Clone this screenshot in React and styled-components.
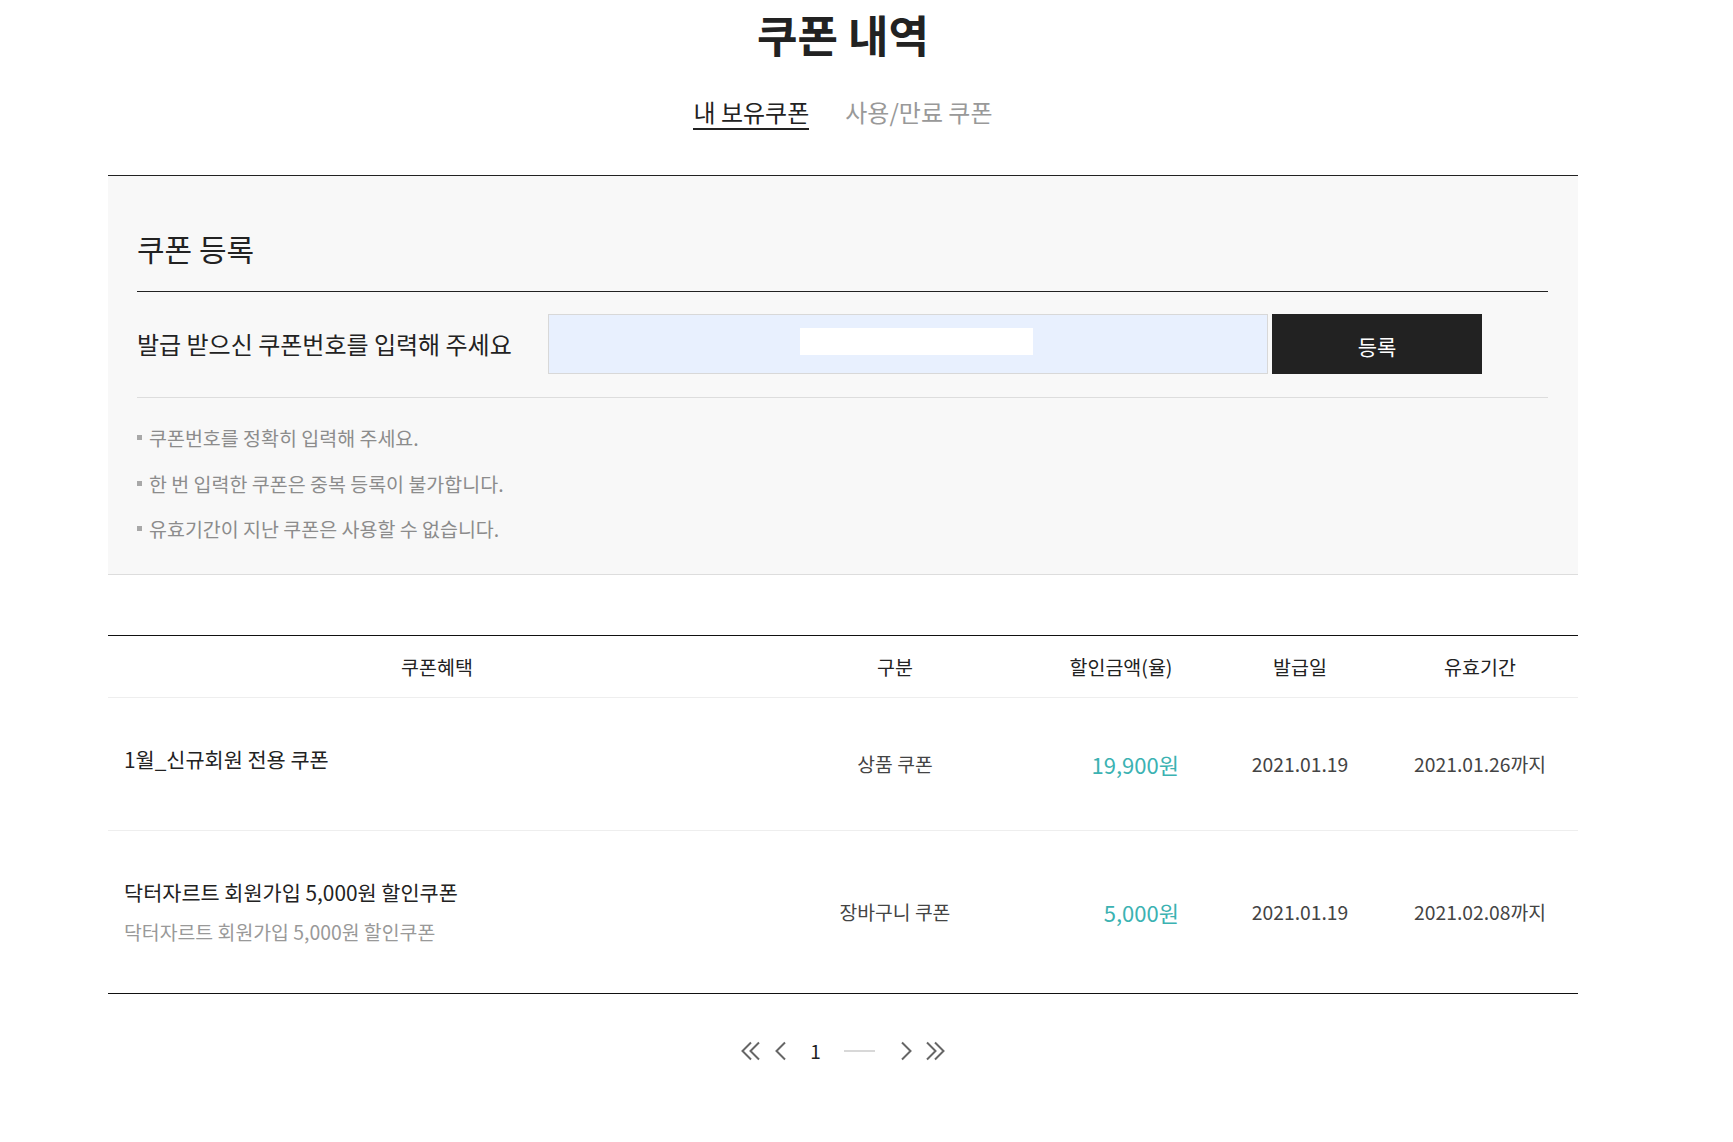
import React from "react";
import styled, { createGlobalStyle } from "styled-components";

const GlobalStyle = createGlobalStyle`
  body {
    margin: 0;
    background: #fff;
    color: #222;
    font-family: "Noto Sans CJK KR", "Noto Sans", sans-serif;
  }
  * {
    box-sizing: border-box;
  }
`;

const Page = styled.div`
  width: 1470px;
  margin-left: 108px;
  padding-bottom: 70px;
`;

const Title = styled.h2`
  margin: 0;
  font-size: 44px;
  font-weight: 700;
  line-height: 68px;
  text-align: center;
  color: #222;
`;

const Tabs = styled.div`
  display: flex;
  justify-content: center;
  gap: 36px;
  margin-top: 28px;
`;

const Tab = styled.a`
  font-size: 24px;
  line-height: 32px;
  color: ${(p) => (p.active ? "#222" : "#999")};
  border-bottom: 2px solid ${(p) => (p.active ? "#222" : "transparent")};
  text-decoration: none;
  cursor: pointer;
`;

const Panel = styled.section`
  margin-top: 45px;
  padding: 0 30px 0 29px;
  background: #f8f8f8;
  border-top: 1px solid #222;
  border-bottom: 1px solid #ddd;
`;

const PanelTitle = styled.h3`
  margin: 0;
  padding: 52px 0 23px;
  font-size: 30px;
  font-weight: 400;
  line-height: 40px;
  border-bottom: 1px solid #222;
`;

const InputRow = styled.div`
  display: flex;
  align-items: center;
  padding: 22px 0 23px;
  border-bottom: 1px solid #ddd;
`;

const Label = styled.label`
  width: 411px;
  font-size: 24px;
  line-height: 32px;
  color: #222;
`;

const InputBox = styled.div`
  position: relative;
  width: 720px;
  height: 60px;
  background: #e8f0fe;
  border: 1px solid #d8d8d8;
`;

const CodeInput = styled.input`
  width: 100%;
  height: 100%;
  border: none;
  background: transparent;
  outline: none;
`;

const Mask = styled.span`
  position: absolute;
  left: 251px;
  top: 13px;
  width: 233px;
  height: 27px;
  background: #fff;
`;

const SubmitButton = styled.button`
  width: 210px;
  height: 60px;
  margin-left: 4px;
  padding-top: 5px;
  border: none;
  background: #222;
  color: #fff;
  font-family: inherit;
  font-size: 21px;
  cursor: pointer;
`;

const Notes = styled.ul`
  list-style: none;
  margin: 0;
  padding: 17px 0 22px;
`;

const Note = styled.li`
  display: flex;
  align-items: center;
  font-size: 19.5px;
  line-height: 45.5px;
  color: #8c8c8c;

  &::before {
    content: "";
    width: 5px;
    height: 5px;
    margin-right: 7px;
    background: #a8a8a8;
  }
`;

const COLUMNS = "658px 258px 194px 164px 196px";

const Table = styled.div`
  margin-top: 60px;
  border-top: 1px solid #111;
  border-bottom: 1px solid #111;
`;

const HeadRow = styled.div`
  display: grid;
  grid-template-columns: ${COLUMNS};
  height: 62px;
  border-bottom: 1px solid #eee;
`;

const HeadCell = styled.div`
  display: flex;
  align-items: center;
  justify-content: center;
  font-size: 19.5px;
  color: #222;
`;

const Row = styled.div`
  display: grid;
  grid-template-columns: ${COLUMNS};
  padding: 46px 0;
  border-top: ${(p) => (p.first ? "none" : "1px solid #eee")};
`;

const NameCell = styled.div`
  display: flex;
  flex-direction: column;
  justify-content: center;
  padding-left: 16px;
`;

const CouponName = styled.div`
  font-size: 20.8px;
  line-height: 30px;
  color: #222;
`;

const CouponDesc = styled.div`
  margin-top: 10px;
  font-size: 19.4px;
  line-height: ${(p) => (p.empty ? "0" : "30px")};
  color: #999;
`;

const Cell = styled.div`
  display: flex;
  align-items: center;
  justify-content: ${(p) => (p.right ? "flex-end" : "center")};
  padding-right: ${(p) => (p.right ? "39px" : "0")};
  font-size: ${(p) => (p.price ? "22px" : "19.3px")};
  color: ${(p) => (p.price ? "#3bb2b2" : "#444")};
`;

const Pager = styled.nav`
  display: flex;
  align-items: center;
  justify-content: center;
  height: 36px;
  margin-top: 39px;
`;

const PageArrow = styled.button`
  display: flex;
  align-items: center;
  margin-left: ${(p) => p.gap || 0}px;
  padding: 0;
  border: none;
  background: none;
  cursor: pointer;
`;

const PageNumber = styled.span`
  width: 33px;
  margin-left: ${(p) => p.gap || 0}px;
  font-size: 19px;
  text-align: center;
  color: #222;
`;

const PageDash = styled.span`
  width: 31px;
  height: 2px;
  margin-left: ${(p) => p.gap || 0}px;
  background: #d8d8d8;
`;

const Chevron = ({ dir, double }) => {
  const flip = dir === "right" ? "scale(-1,1)" : undefined;
  const w = double ? 21 : 13;
  return (
    <svg width={w} height="20" viewBox={`0 0 ${w} 20`} fill="none">
      <g
        transform={flip}
        style={{ transformOrigin: "center" }}
        stroke="#666"
        strokeWidth="2"
      >
        <polyline points="11,1.5 2.5,10 11,18.5" />
        {double && <polyline points="19,1.5 10.5,10 19,18.5" />}
      </g>
    </svg>
  );
};

const coupons = [
  {
    name: "1월_신규회원 전용 쿠폰",
    desc: "",
    type: "상품 쿠폰",
    price: "19,900원",
    issued: "2021.01.19",
    expire: "2021.01.26까지",
  },
  {
    name: "닥터자르트 회원가입 5,000원 할인쿠폰",
    desc: "닥터자르트 회원가입 5,000원 할인쿠폰",
    type: "장바구니 쿠폰",
    price: "5,000원",
    issued: "2021.01.19",
    expire: "2021.02.08까지",
  },
];

export default function App() {
  return (
    <>
      <GlobalStyle />
      <Page>
        <Title>쿠폰 내역</Title>
        <Tabs>
          <Tab active>내 보유쿠폰</Tab>
          <Tab>사용/만료 쿠폰</Tab>
        </Tabs>

        <Panel>
          <PanelTitle>쿠폰 등록</PanelTitle>
          <InputRow>
            <Label>발급 받으신 쿠폰번호를 입력해 주세요</Label>
            <InputBox>
              <CodeInput type="text" />
              <Mask />
            </InputBox>
            <SubmitButton>등록</SubmitButton>
          </InputRow>
          <Notes>
            <Note>쿠폰번호를 정확히 입력해 주세요.</Note>
            <Note>한 번 입력한 쿠폰은 중복 등록이 불가합니다.</Note>
            <Note>유효기간이 지난 쿠폰은 사용할 수 없습니다.</Note>
          </Notes>
        </Panel>

        <Table>
          <HeadRow>
            <HeadCell>쿠폰혜택</HeadCell>
            <HeadCell>구분</HeadCell>
            <HeadCell>할인금액(율)</HeadCell>
            <HeadCell>발급일</HeadCell>
            <HeadCell>유효기간</HeadCell>
          </HeadRow>
          {coupons.map((c, i) => (
            <Row key={i} first={i === 0}>
              <NameCell>
                <CouponName>{c.name}</CouponName>
                <CouponDesc empty={!c.desc}>{c.desc}</CouponDesc>
              </NameCell>
              <Cell>{c.type}</Cell>
              <Cell right price>
                {c.price}
              </Cell>
              <Cell>{c.issued}</Cell>
              <Cell>{c.expire}</Cell>
            </Row>
          ))}
        </Table>

        <Pager>
          <PageArrow>
            <Chevron double />
          </PageArrow>
          <PageArrow gap={13}>
            <Chevron />
          </PageArrow>
          <PageNumber gap={12}>1</PageNumber>
          <PageDash gap={12} />
          <PageArrow gap={25}>
            <Chevron dir="right" />
          </PageArrow>
          <PageArrow gap={12}>
            <Chevron dir="right" double />
          </PageArrow>
        </Pager>
      </Page>
    </>
  );
}
